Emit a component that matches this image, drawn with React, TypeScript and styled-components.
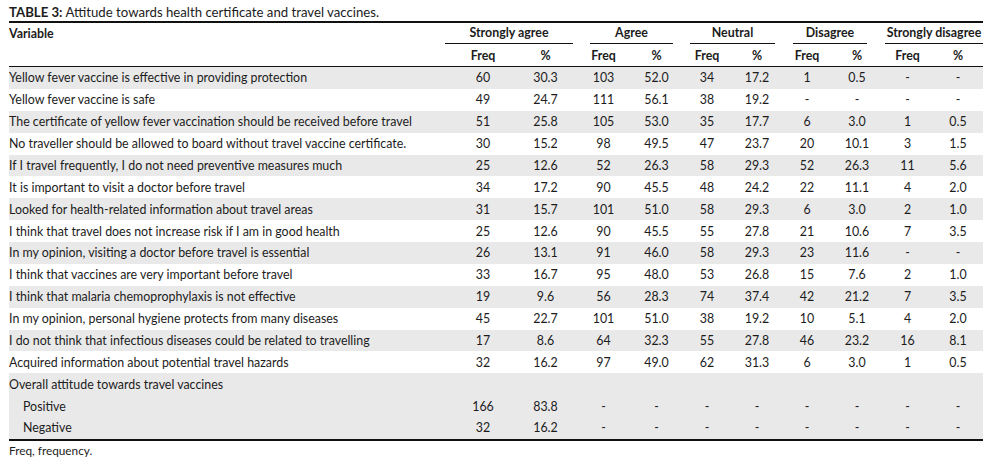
import React from "react";
import styled, { createGlobalStyle } from "styled-components";

/* --- Data --- */

type Group = { label: string; inset: [number, number] };

const groups: Group[] = [
  { label: "Strongly agree", inset: [-6, 3] },
  { label: "Agree", inset: [14, 9] },
  { label: "Neutral", inset: [8, 7] },
  { label: "Disagree", inset: [11, 15] },
  { label: "Strongly disagree", inset: [3, 0] },
];

const rows: string[][] = [
  ["Yellow fever vaccine is effective in providing protection", "60", "30.3", "103", "52.0", "34", "17.2", "1", "0.5", "-", "-"],
  ["Yellow fever vaccine is safe", "49", "24.7", "111", "56.1", "38", "19.2", "-", "-", "-", "-"],
  ["The certificate of yellow fever vaccination should be received before travel", "51", "25.8", "105", "53.0", "35", "17.7", "6", "3.0", "1", "0.5"],
  ["No traveller should be allowed to board without travel vaccine certificate.", "30", "15.2", "98", "49.5", "47", "23.7", "20", "10.1", "3", "1.5"],
  ["If I travel frequently, I do not need preventive measures much", "25", "12.6", "52", "26.3", "58", "29.3", "52", "26.3", "11", "5.6"],
  ["It is important to visit a doctor before travel", "34", "17.2", "90", "45.5", "48", "24.2", "22", "11.1", "4", "2.0"],
  ["Looked for health-related information about travel areas", "31", "15.7", "101", "51.0", "58", "29.3", "6", "3.0", "2", "1.0"],
  ["I think that travel does not increase risk if I am in good health", "25", "12.6", "90", "45.5", "55", "27.8", "21", "10.6", "7", "3.5"],
  ["In my opinion, visiting a doctor before travel is essential", "26", "13.1", "91", "46.0", "58", "29.3", "23", "11.6", "-", "-"],
  ["I think that vaccines are very important before travel", "33", "16.7", "95", "48.0", "53", "26.8", "15", "7.6", "2", "1.0"],
  ["I think that malaria chemoprophylaxis is not effective", "19", "9.6", "56", "28.3", "74", "37.4", "42", "21.2", "7", "3.5"],
  ["In my opinion, personal hygiene protects from many diseases", "45", "22.7", "101", "51.0", "38", "19.2", "10", "5.1", "4", "2.0"],
  ["I do not think that infectious diseases could be related to travelling", "17", "8.6", "64", "32.3", "55", "27.8", "46", "23.2", "16", "8.1"],
  ["Acquired information about potential travel hazards", "32", "16.2", "97", "49.0", "62", "31.3", "6", "3.0", "1", "0.5"],
];

const overall: string[][] = [
  ["Positive", "166", "83.8", "-", "-", "-", "-", "-", "-", "-", "-"],
  ["Negative", "32", "16.2", "-", "-", "-", "-", "-", "-", "-", "-"],
];

/* --- Styled Components --- */

const COLS = "442px 64px 61px 55px 51px 50px 50px 50px 50px 51px 50px";

const GlobalStyle = createGlobalStyle`
  html, body {
    margin: 0;
    padding: 0;
    background: #ffffff;
  }
  body {
    font-family: Lato, "Open Sans", sans-serif;
    color: #1c1c1c;
  }
`;

const Page = styled.div`
  width: 999px;
  height: 460px;
  padding-left: 9px;
  box-sizing: border-box;
  font-size: 12.4px;
`;

const Caption = styled.div`
  height: 21px;
  padding-top: 3px;
  line-height: 18px;
  box-sizing: border-box;
  font-size: 13.2px;

  b {
    font-weight: 700;
  }
`;

const Table = styled.div`
  width: 974px;
  border-top: 2px solid #111111;
  border-bottom: 2px solid #111111;
`;

const Row = styled.div<{ $shaded?: boolean; $height: number }>`
  display: grid;
  grid-template-columns: ${COLS};
  height: ${(p) => p.$height}px;
  align-items: center;
  background: ${(p) => (p.$shaded ? "#e9e9e9" : "transparent")};
`;

const SubHeadRow = styled(Row)`
  border-bottom: 1px solid #111111;
`;

const HeadCell = styled.div<{ $left?: boolean }>`
  font-weight: 700;
  text-align: ${(p) => (p.$left ? "left" : "center")};
  white-space: nowrap;
`;

const GroupCell = styled.div`
  grid-column: span 2;
  align-self: stretch;
  display: flex;
`;

const GroupLabel = styled.div<{ $inset: [number, number] }>`
  flex: 1;
  margin: 0 ${(p) => p.$inset[1]}px 0 ${(p) => p.$inset[0]}px;
  border-bottom: 1px solid #111111;
  font-weight: 700;
  text-align: center;
  white-space: nowrap;
  line-height: 20px;
`;

const Cell = styled.div<{ $left?: boolean; $indent?: boolean }>`
  text-align: ${(p) => (p.$left ? "left" : "center")};
  padding-left: ${(p) => (p.$indent ? "14px" : "0")};
  white-space: nowrap;
`;

const Footnote = styled.div`
  line-height: 18px;
  padding-top: 1px;
  font-size: 11.8px;
`;

/* --- Component --- */

const ROW_H = 21.875;

const DataRow: React.FC<{ cells: string[]; shaded?: boolean; indent?: boolean }> = ({
  cells,
  shaded,
  indent,
}) => (
  <Row $shaded={shaded} $height={ROW_H}>
    {cells.map((c, i) => (
      <Cell key={i} $left={i === 0} $indent={indent && i === 0}>
        {c}
      </Cell>
    ))}
  </Row>
);

const App: React.FC = () => {
  return (
    <Page>
      <GlobalStyle />
      <Caption>
        <b>TABLE 3:</b> Attitude towards health certificate and travel vaccines.
      </Caption>

      <Table>
        {/* GROUP HEADERS */}
        <Row $height={21}>
          <HeadCell $left>Variable</HeadCell>
          {groups.map((g) => (
            <GroupCell key={g.label}>
              <GroupLabel $inset={g.inset}>{g.label}</GroupLabel>
            </GroupCell>
          ))}
        </Row>

        {/* FREQ / % */}
        <SubHeadRow $height={22}>
          <HeadCell $left />
          {groups.map((g) => (
            <React.Fragment key={g.label}>
              <HeadCell>Freq</HeadCell>
              <HeadCell>%</HeadCell>
            </React.Fragment>
          ))}
        </SubHeadRow>

        {rows.map((r, i) => (
          <DataRow key={r[0]} cells={r} shaded={i % 2 === 0} />
        ))}

        {/* OVERALL */}
        <Row $shaded $height={ROW_H}>
          <Cell $left>Overall attitude towards travel vaccines</Cell>
        </Row>
        {overall.map((r) => (
          <DataRow key={r[0]} cells={r} shaded indent />
        ))}
      </Table>

      <Footnote>Freq, frequency.</Footnote>
    </Page>
  );
};

export default App;
